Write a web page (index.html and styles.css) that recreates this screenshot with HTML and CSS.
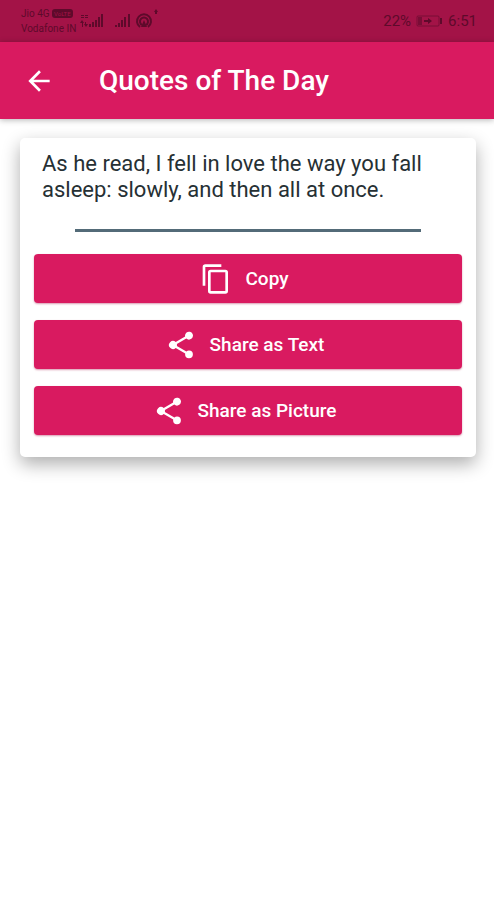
FILE: index.html
```html
<!DOCTYPE html>
<html lang="en">
<head>
<meta charset="utf-8">
<meta name="viewport" content="width=device-width, initial-scale=1">
<title>Quotes of The Day</title>
<link rel="stylesheet" href="styles.css">
</head>
<body>
<div class="status">
  <div class="status-left">
    <div class="carriers">
      <div class="carrier">Jio 4G <span class="volte">VoLTE</span></div>
      <div class="carrier">Vodafone IN</div>
    </div>
    <svg class="signal" width="24" height="16" viewBox="0 0 24 16" fill="currentColor" aria-hidden="true">
      <path d="M1 2h3v1H1zM5 2h3v1H5zM1 4h3v1H1zM5 4h3v1H5zM2 7l2 3H3v4H2v-4H0zM6 14l-2-3h1V9h1v2h2zM9 11h2v3H9zM12 9h2v5h-2zM15 7h2v7h-2zM18 4h2v10h-2zM21 1h2v13h-2z"/>
    </svg>
    <svg class="signal second" width="16" height="16" viewBox="0 0 16 16" fill="currentColor" aria-hidden="true">
      <path d="M0 12h2v2H0zM3 10h2v4H3zM6 7h2v7H6zM9 4h2v10H9zM13 1h2v13h-2z"/>
    </svg>
    <svg class="hotspot" width="26" height="26" viewBox="0 0 26 26" fill="none" stroke="currentColor" aria-hidden="true">
      <path stroke-width="2" d="M5 19a7 7 0 1 1 8 0M7 17a4 4 0 1 1 4 0"/>
      <path fill="currentColor" stroke="none" d="M9 12l3 7H6zM21 1l2 3h-1v2h-2V4h-1z"/>
    </svg>
  </div>
  <div class="status-right">
    <span>22%</span>
    <svg width="27" height="14" viewBox="0 0 27 14" fill="none" stroke="currentColor" aria-hidden="true">
      <rect x="1" y="2" width="22" height="10" rx="1" stroke-width="1" opacity="0.6"/>
      <path fill="currentColor" stroke="none" opacity="0.6" d="M2 3h4v8H2z"/>
      <path fill="currentColor" stroke="none" d="M8 6h4V4l4 3-4 3V8H8zM24 4h2v6h-2z"/>
    </svg>
    <span>6:51</span>
  </div>
</div>
<header class="appbar">
  <button class="back" type="button" aria-label="Back">
    <svg width="32" height="32" viewBox="0 0 24 24" fill="currentColor" aria-hidden="true"><path d="M20 11H7.83l5.59-5.59L12 4l-8 8 8 8 1.41-1.41L7.83 13H20z"/></svg>
  </button>
  <h1 class="title">Quotes of The Day</h1>
</header>
<main class="card">
  <p class="quote">As he read, I fell in love the way you fall asleep: slowly, and then all at once.</p>
  <hr class="rule">
  <div class="actions">
    <button class="action" type="button">
      <svg width="32" height="32" viewBox="0 0 24 24" fill="currentColor" aria-hidden="true"><path d="M16 1H4a2 2 0 0 0-2 2v14h2V3h12zM19 5H8a2 2 0 0 0-2 2v14a2 2 0 0 0 2 2h11a2 2 0 0 0 2-2V7a2 2 0 0 0-2-2zm0 16H8V7h11z"/></svg>
      Copy
    </button>
    <button class="action" type="button">
      <svg width="32" height="32" viewBox="0 0 24 24" fill="currentColor" aria-hidden="true"><path d="M18 16.08c-.76 0-1.44.3-1.96.77L8.91 12.7c.05-.23.09-.46.09-.7s-.04-.47-.09-.7l7.05-4.11A3 3 0 1 0 15 5c0 .24.04.47.09.7L8.04 9.81A3 3 0 1 0 8.04 14.19l7.12 4.16c-.05.21-.08.43-.08.65a2.92 2.92 0 1 0 2.92-2.92z"/></svg>
      Share as Text
    </button>
    <button class="action" type="button">
      <svg width="32" height="32" viewBox="0 0 24 24" fill="currentColor" aria-hidden="true"><path d="M18 16.08c-.76 0-1.44.3-1.96.77L8.91 12.7c.05-.23.09-.46.09-.7s-.04-.47-.09-.7l7.05-4.11A3 3 0 1 0 15 5c0 .24.04.47.09.7L8.04 9.81A3 3 0 1 0 8.04 14.19l7.12 4.16c-.05.21-.08.43-.08.65a2.92 2.92 0 1 0 2.92-2.92z"/></svg>
      Share as Picture
    </button>
  </div>
</main>
</body>
</html>
```
FILE: styles.css
```css
* {
  box-sizing: border-box;
}

body {
  min-height: 100vh;
  margin: 0;
  background: #fff;
  color: #263034;
  font-family: Roboto, "Liberation Sans", sans-serif;
}

.status {
  display: flex;
  justify-content: space-between;
  align-items: center;
  height: 42px;
  padding: 0 17px 0 21px;
  background: #a31347;
  color: #5e0a2b;
}

.status-left,
.status-right {
  display: flex;
  align-items: center;
}

.status-right {
  gap: 5px;
  font-size: 15px;
}

.carrier {
  font-size: 10px;
  line-height: 15px;
  white-space: nowrap;
}

.volte {
  display: inline-block;
  padding: 0 2px;
  border-radius: 3px;
  background: #5e0a2b;
  color: #a31347;
  font-size: 6px;
  line-height: 9px;
  vertical-align: 1px;
}

.signal {
  margin-left: 4px;
}

.second {
  margin-left: 11px;
}

.hotspot {
  margin-left: 4px;
}

.appbar {
  display: flex;
  align-items: center;
  height: 77px;
  padding: 0 23px;
  gap: 44px;
  background: #d91a60;
  color: #fff;
  box-shadow: 0 1px 6px rgba(0, 0, 0, 0.3);
}

.back {
  display: flex;
  padding: 0;
  border: 0;
  background: none;
  color: inherit;
}

.title {
  margin: 0;
  font-size: 28px;
  font-weight: 500;
  line-height: 32px;
}

.card {
  margin: 19px 18px 0 20px;
  padding: 13px 14px 22px;
  border-radius: 5px;
  background: #fff;
  box-shadow: 0 7px 18px rgba(0, 0, 0, 0.32);
}

.quote {
  margin: 0 8px;
  font-size: 22px;
  line-height: 26px;
}

.rule {
  height: 3px;
  margin: 26px 41px 22px;
  border: 0;
  background: #536b78;
}

.actions {
  display: grid;
  gap: 17px;
}

.action {
  display: flex;
  align-items: center;
  justify-content: center;
  gap: 13px;
  height: 49px;
  padding: 0 7px 0 0;
  border: 0;
  border-radius: 4px;
  background: #d91a60;
  box-shadow: 0 1px 2px rgba(160, 0, 60, 0.4);
  color: #fff;
  font: 500 19px/24px Roboto, "Liberation Sans", sans-serif;
}
```
